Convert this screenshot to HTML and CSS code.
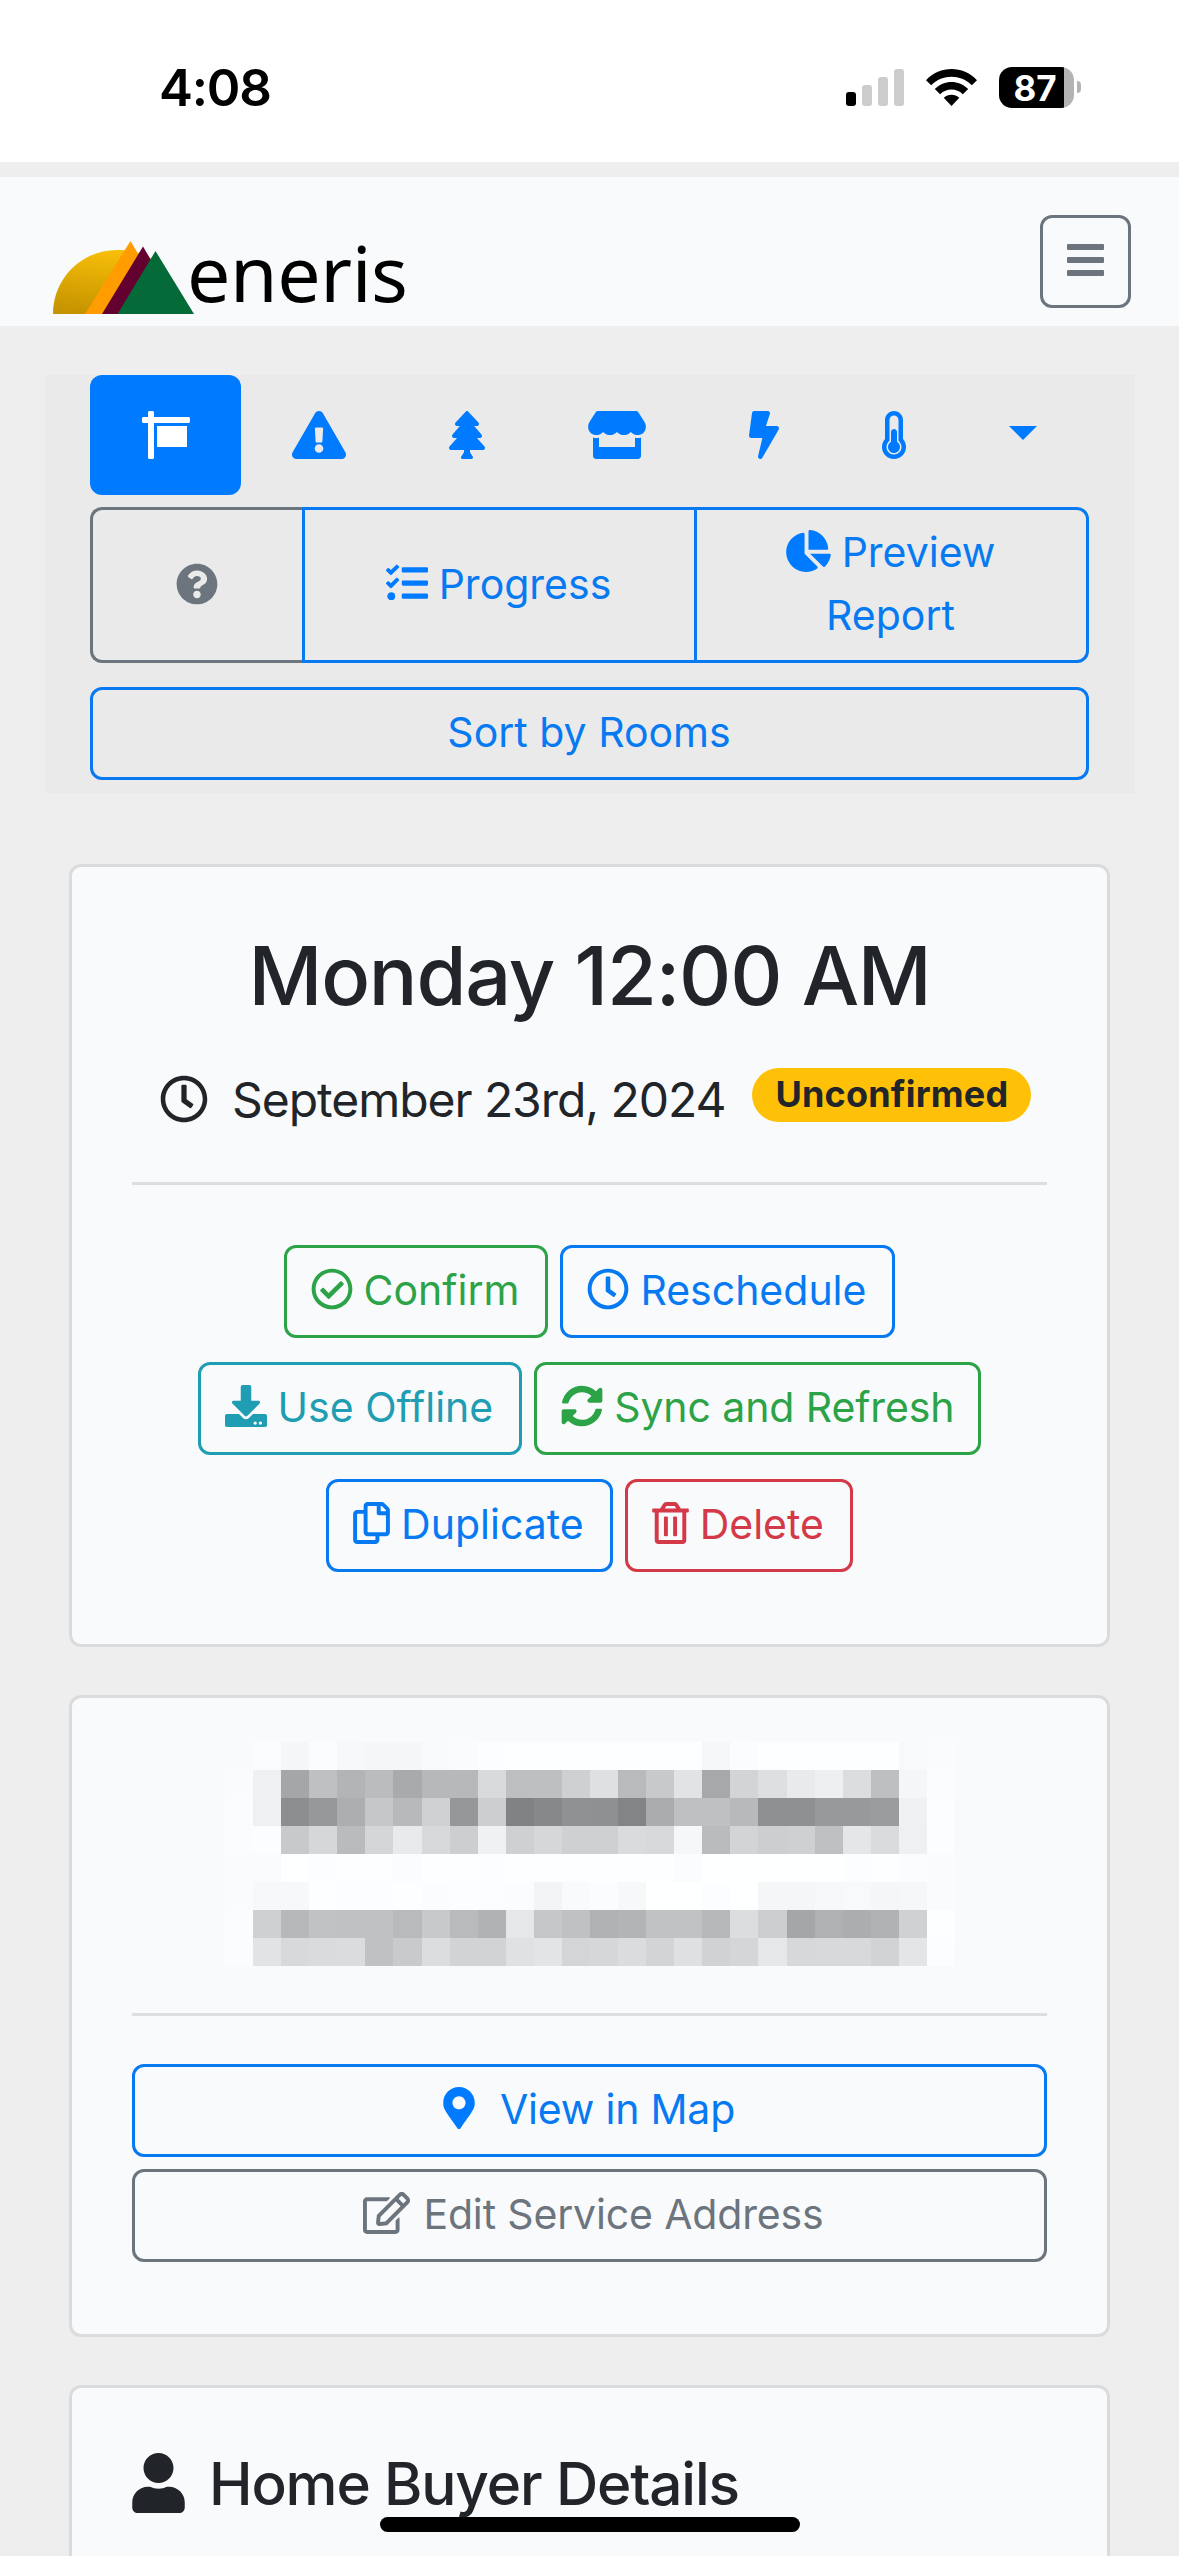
FILE: index.html
```html
<!DOCTYPE html>
<html lang="en">
<head>
<meta charset="utf-8">
<title>Eneris – Inspection</title>
<link rel="stylesheet" href="styles.css">
</head>
<body>
<header class="status">
  <div class="status-time">4:08</div>
  <div class="status-icons">
    <svg class="signal" width="58" height="37" viewBox="0 0 58 37"><rect y="23" width="10" height="14" rx="3"/><g fill="#ccc"><rect x="16" y="16" width="10" height="21" rx="3"/><rect x="32" y="8" width="10" height="29" rx="3"/><rect x="48" width="10" height="37" rx="3"/></g></svg>
    <svg class="wifi" width="51" height="37" viewBox="0 0 51 37"><path d="M0 11.2C14-3.7 37-3.7 51 11.2L45.8 16.3C34.5 5 16.500 5 5.200 16.300zM8.800 20C18 10.500 33 10.500 42.200 20L36.800 25.200C30.500 19 20.500 19 14.200 25.200zM17.700 28.700C22 24.600 29 24.600 33.300 28.700L25.500 37z"/></svg>
    <div class="battery"><span>87</span></div>
    <div class="battery-nub"></div>
  </div>
</header>

<nav class="navbar">
  <div class="brand">
    <svg width="141" height="73" viewBox="0 0 141 73">
      <defs><linearGradient id="sun" x1="0.600" y1="0" x2="0.400" y2="1"><stop offset="0" stop-color="#f9bf08"/><stop offset="1" stop-color="#c59400"/></linearGradient></defs>
      <path d="M0 73C0 37 29 9 64 9C82 9 96 14 108 25V73z" fill="url(#sun)"/>
      <path d="M32 73L77.500 0L110 55V73z" fill="#ff9c00"/>
      <path d="M49 73L90 5.500L118 53V73z" fill="#640030"/>
      <path d="M64.500 73L102.500 10L141 73z" fill="#046a38"/>
    </svg>
    <span class="brand-name">eneris</span>
  </div>
  <button class="toggler" aria-label="Menu"><i></i><i></i><i></i></button>
</nav>

<main>
  <section class="toolbar">
    <div class="tabs">
      <a class="tab active"><svg width="48" height="48" viewBox="0 0 512 512"><path d="M496 64H128V16c0-8.800-7.200-16-16-16H80c-8.800 0-16 7.200-16 16v48H16C7.200 64 0 71.200 0 80v32c0 8.800 7.200 16 16 16h48v368c0 8.800 7.200 16 16 16h32c8.800 0 16-7.200 16-16V128h368c8.800 0 16-7.200 16-16V80c0-8.800-7.200-16-16-16zM160 384h320V160H160v224z"/></svg></a>
      <a class="tab"><svg width="54" height="48" viewBox="0 0 576 512"><path d="M569.517 440.013C587.975 472.007 564.806 512 527.94 512H48.054c-36.937 0-59.999-40.055-41.577-71.987L246.423 23.985c18.467-32.009 64.72-31.951 83.154 0l239.94 416.028zM288 354c-25.405 0-46 20.595-46 46s20.595 46 46 46 46-20.595 46-46-20.595-46-46-46zm-43.673-165.346l7.418 136c.347 6.364 5.609 11.346 11.982 11.346h48.546c6.373 0 11.635-4.982 11.982-11.346l7.418-136c.375-6.874-5.098-12.654-11.982-12.654h-63.383c-6.884 0-12.356 5.780-11.981 12.654z"/></svg></a>
      <a class="tab"><svg width="36" height="48" viewBox="0 0 384 512"><path d="M378.310 378.490L298.420 288h30.630c9.010 0 16.980-5 20.780-13.060 3.800-8.040 2.550-17.260-3.280-24.050L268.420 160h28.890c9.100 0 17.300-5.350 20.860-13.610 3.520-8.130 1.860-17.590-4.240-24.080L203.660 4.830c-6.030-6.450-17.280-6.450-23.320 0L70.060 122.310c-6.100 6.490-7.750 15.950-4.240 24.080C69.380 154.650 77.590 160 86.690 160h28.890l-78.140 90.910c-5.810 6.780-7.060 15.990-3.270 24.040C37.970 283 45.930 288 54.950 288h30.630L5.690 378.490c-6 6.790-7.360 16.090-3.560 24.260 3.750 8.050 12 13.250 21.010 13.250H160v24.450l-30.290 48.400c-5.320 10.640 2.420 23.160 14.310 23.160h95.960c11.890 0 19.630-12.520 14.310-23.160L224 440.450V416h136.860c9.010 0 17.260-5.200 21.010-13.250 3.800-8.170 2.440-17.470-3.560-24.260z"/></svg></a>
      <a class="tab"><svg width="58" height="48" viewBox="0 0 616 512"><path d="M602 118.600L537.100 15C531.300 5.700 521 0 510 0H106C95 0 84.700 5.700 78.900 15L14 118.600c-33.500 53.500-3.800 127.900 58.800 136.400 4.500.6 9.100.9 13.700.9 29.600 0 55.800-13 73.800-33.100 18 20.100 44.300 33.100 73.800 33.100 29.600 0 55.800-13 73.800-33.100 18 20.100 44.300 33.100 73.800 33.100 29.600 0 55.800-13 73.800-33.100 18.100 20.100 44.300 33.100 73.800 33.100 4.700 0 9.200-.3 13.700-.9 62.800-8.400 92.600-82.800 59-136.400zM529.500 288c-10 0-19.900-1.500-29.500-3.800V384H116v-99.800c-9.600 2.200-19.500 3.800-29.500 3.800-6 0-12.100-.4-18-1.200-5.600-.8-11.100-2.100-16.400-3.600V480c0 17.700 14.300 32 32 32h448c17.700 0 32-14.300 32-32V283.200c-5.400 1.600-10.800 2.900-16.400 3.600-6.100.8-12.100 1.200-18.200 1.200z"/></svg></a>
      <a class="tab"><svg width="30" height="48" viewBox="0 0 320 512"><path d="M296 160H180.600l42.600-129.800C227.200 15 215.700 0 200 0H56C44 0 33.800 8.900 32.200 20.800l-32 240C-1.700 275.200 9.500 288 24 288h118.700L96.600 482.500c-3.600 15.200 8 29.500 23.300 29.500 8.400 0 16.400-4.400 20.800-12l176-304c9.300-15.900-2.200-36-20.700-36z"/></svg></a>
      <a class="tab"><svg width="24" height="48" viewBox="0 0 256 512"><path d="M192 384c0 35.346-28.654 64-64 64s-64-28.654-64-64c0-23.685 12.876-44.349 32-55.417V224c0-17.673 14.327-32 32-32s32 14.327 32 32v104.583c19.124 11.068 32 31.732 32 55.417zm32-84.653c19.912 22.563 32 52.194 32 84.653 0 70.696-57.303 128-128 128-.299 0-.609-.001-.909-.003C56.789 511.509-.357 453.636.002 383.333.166 351.135 12.223 321.755 32 299.347V96c0-53.019 42.981-96 96-96s96 42.981 96 96v203.347zM208 384c0-34.339-19.370-52.190-32-66.502V96c0-26.467-21.533-48-48-48S80 69.533 80 96v221.498c-12.732 14.428-31.825 32.100-31.999 66.080-.224 43.876 35.563 80.116 79.423 80.420L128 464c44.112 0 80-35.888 80-80z"/></svg></a>
      <a class="tab"><svg class="caret" width="28" height="14" viewBox="0 0 28 14"><path d="M0 0H28L14 14z"/></svg></a>
    </div>
    <div class="group">
      <button class="cell help"><svg width="42" height="42" viewBox="0 0 512 512"><path d="M504 256c0 136.997-111.043 248-248 248S8 392.997 8 256C8 119.083 119.043 8 256 8s248 111.083 248 248zM262.655 90c-54.497 0-89.255 22.957-116.549 63.758-3.536 5.286-2.353 12.415 2.715 16.258l34.699 26.310c5.205 3.947 12.621 3.008 16.665-2.122 17.864-22.658 30.113-35.797 57.303-35.797 20.429 0 45.698 13.148 45.698 32.958 0 14.976-12.363 22.667-32.534 33.976C247.128 238.528 216 254.941 216 296v4c0 6.627 5.373 12 12 12h56c6.627 0 12-5.373 12-12v-1.333c0-28.462 83.186-29.647 83.186-106.667 0-58.002-60.165-102-116.531-102zM256 338c-25.365 0-46 20.635-46 46 0 25.364 20.635 46 46 46s46-20.636 46-46c0-25.364-20.635-46-46-46z"/></svg></button>
      <button class="cell progress"><span class="line"><svg width="42" height="42" viewBox="0 0 512 512"><path d="M139.610 35.500a12 12 0 0 0-17 0L58.930 98.810l-22.700-22.120a12 12 0 0 0-17 0L3.530 92.410a12 12 0 0 0 0 17l47.590 47.400a12.780 12.780 0 0 0 17.610 0l15.590-15.620L156.520 69a12.090 12.090 0 0 0 .09-17zm0 159.190a12 12 0 0 0-17 0l-63.680 63.720-22.700-22.100a12 12 0 0 0-17 0L3.530 252a12 12 0 0 0 0 17L51 316.500a12.770 12.770 0 0 0 17.600 0l15.700-15.690 72.200-72.220a12 12 0 0 0 .09-16.900zM64 368c-26.490 0-48.590 21.500-48.590 48S37.530 464 64 464a48 48 0 0 0 0-96zm432 16H208a16 16 0 0 0-16 16v32a16 16 0 0 0 16 16h288a16 16 0 0 0 16-16v-32a16 16 0 0 0-16-16zm0-320H208a16 16 0 0 0-16 16v32a16 16 0 0 0 16 16h288a16 16 0 0 0 16-16V80a16 16 0 0 0-16-16zm0 160H208a16 16 0 0 0-16 16v32a16 16 0 0 0 16 16h288a16 16 0 0 0 16-16v-32a16 16 0 0 0-16-16z"/></svg>Progress</span></button>
      <button class="cell preview"><span class="line"><svg width="45" height="42" viewBox="0 0 544 512"><path d="M527.790 288H290.500l158.030 158.030c6.040 6.040 15.980 6.530 22.190.68 38.700-36.460 65.320-85.610 73.130-140.860 1.340-9.460-6.510-17.850-16.060-17.850zm-15.830-64.800C503.720 103.740 408.260 8.280 288.800.04 279.680-.59 272 7.100 272 16.240V240h223.770c9.140 0 16.820-7.680 16.190-16.800zM224 288V50.710c0-9.550-8.390-17.400-17.840-16.060C86.990 51.490-4.100 155.600.14 280.370 4.500 408.510 114.830 513.590 243.030 511.980c50.400-.63 96.970-16.870 135.260-44.030 7.900-5.600 8.420-17.230 1.570-24.080L224 288z"/></svg>Preview</span><span class="line">Report</span></button>
    </div>
    <button class="btn block blue">Sort by Rooms</button>
  </section>

  <section class="card">
    <h1>Monday 12:00 AM</h1>
    <div class="date">
      <svg width="48" height="48" viewBox="0 0 512 512"><path d="M256 8C119 8 8 119 8 256s111 248 248 248 248-111 248-248S393 8 256 8zm0 448c-110.500 0-200-89.500-200-200S145.500 56 256 56s200 89.500 200 200-89.500 200-200 200zm61.800-104.400l-84.900-61.700c-3.100-2.300-4.900-5.900-4.900-9.700V116c0-6.600 5.400-12 12-12h32c6.600 0 12 5.400 12 12v141.700l66.800 48.600c5.400 3.900 6.500 11.400 2.600 16.800L334.600 349c-3.900 5.300-11.400 6.500-16.800 2.600z"/></svg>
      <span class="date-text">September 23rd, 2024</span>
      <span class="badge">Unconfirmed</span>
    </div>
    <hr>
    <div class="actions">
      <div class="row">
        <button class="btn green"><svg width="42" height="42" viewBox="0 0 512 512"><path d="M256 8C119.033 8 8 119.033 8 256s111.033 248 248 248 248-111.033 248-248S392.967 8 256 8zm0 48c110.532 0 200 89.451 200 200 0 110.532-89.451 200-200 200-110.532 0-200-89.451-200-200 0-110.532 89.451-200 200-200m140.204 130.267l-22.536-22.718c-4.667-4.705-12.265-4.736-16.970-.068L215.346 303.697l-59.792-60.277c-4.667-4.705-12.265-4.736-16.970-.069l-22.719 22.536c-4.705 4.667-4.736 12.265-.068 16.971l90.781 91.516c4.667 4.705 12.265 4.736 16.970.068l172.589-171.204c4.704-4.668 4.734-12.266.067-16.971z"/></svg>Confirm</button>
        <button class="btn blue"><svg width="42" height="42" viewBox="0 0 512 512"><path d="M256 8C119 8 8 119 8 256s111 248 248 248 248-111 248-248S393 8 256 8zm0 448c-110.500 0-200-89.500-200-200S145.500 56 256 56s200 89.500 200 200-89.500 200-200 200zm61.800-104.400l-84.900-61.700c-3.100-2.300-4.900-5.900-4.900-9.700V116c0-6.600 5.400-12 12-12h32c6.600 0 12 5.400 12 12v141.700l66.800 48.600c5.400 3.900 6.500 11.400 2.600 16.800L334.600 349c-3.900 5.300-11.400 6.500-16.800 2.600z"/></svg>Reschedule</button>
      </div>
      <div class="row">
        <button class="btn teal"><svg width="42" height="42" viewBox="0 0 512 512"><path d="M216 0h80c13.300 0 24 10.700 24 24v168h87.700c17.800 0 26.700 21.500 14.100 34.100L269.700 378.300c-7.500 7.500-19.800 7.500-27.300 0L90.100 226.100c-12.600-12.600-3.700-34.100 14.100-34.100H192V24c0-13.300 10.700-24 24-24zm296 376v112c0 13.300-10.700 24-24 24H24c-13.300 0-24-10.700-24-24V376c0-13.300 10.700-24 24-24h146.700l49 49c20.100 20.100 52.500 20.100 72.600 0l49-49H488c13.300 0 24 10.700 24 24zm-124 88c0-11-9-20-20-20s-20 9-20 20 9 20 20 20 20-9 20-20zm64 0c0-11-9-20-20-20s-20 9-20 20 9 20 20 20 20-9 20-20z"/></svg>Use Offline</button>
        <button class="btn green sync"><svg width="42" height="42" viewBox="0 0 512 512"><path d="M370.720 133.280C339.458 104.008 298.888 87.962 255.848 88c-77.458.068-144.328 53.178-162.791 126.850-1.344 5.363-6.122 9.150-11.651 9.150H24.103c-7.498 0-13.194-6.807-11.807-14.176C33.933 94.924 134.813 8 256 8c66.448 0 126.791 26.136 171.315 68.685L463.030 40.970C478.149 25.851 504 36.559 504 57.941V192c0 13.255-10.745 24-24 24H345.941c-21.382 0-32.090-25.851-16.971-40.971l41.750-41.749zM32 296h134.059c21.382 0 32.090 25.851 16.971 40.971l-41.750 41.750c31.262 29.273 71.835 45.319 114.876 45.280 77.418-.07 144.315-53.144 162.787-126.849 1.344-5.363 6.122-9.150 11.651-9.150h57.304c7.498 0 13.194 6.807 11.807 14.176C478.067 417.076 377.187 504 256 504c-66.448 0-126.791-26.136-171.315-68.685L48.970 471.030C33.851 486.149 8 475.441 8 454.059V320c0-13.255 10.745-24 24-24z"/></svg>Sync and Refresh</button>
      </div>
      <div class="row">
        <button class="btn blue"><svg width="37" height="42" viewBox="0 0 448 512"><path d="M433.941 65.941l-51.882-51.882A48 48 0 0 0 348.118 0H176c-26.510 0-48 21.490-48 48v48H48c-26.510 0-48 21.490-48 48v320c0 26.510 21.490 48 48 48h224c26.510 0 48-21.490 48-48v-48h80c26.510 0 48-21.490 48-48V99.882a48 48 0 0 0-14.059-33.941zM266 464H54a6 6 0 0 1-6-6V150a6 6 0 0 1 6-6h74v224c0 26.510 21.490 48 48 48h96v42a6 6 0 0 1-6 6zm128-96H182a6 6 0 0 1-6-6V54a6 6 0 0 1 6-6h106v88c0 13.255 10.745 24 24 24h88v202a6 6 0 0 1-6 6zm6-256h-64V48h9.632c1.591 0 3.117.632 4.243 1.757l48.368 48.368a6 6 0 0 1 1.757 4.243V112z"/></svg>Duplicate</button>
        <button class="btn red"><svg width="37" height="42" viewBox="0 0 448 512"><path d="M268 416h24a12 12 0 0 0 12-12V188a12 12 0 0 0-12-12h-24a12 12 0 0 0-12 12v216a12 12 0 0 0 12 12zM432 80h-82.410l-34-56.700A48 48 0 0 0 274.410 0H173.590a48 48 0 0 0-41.160 23.300L98.410 80H16A16 16 0 0 0 0 96v16a16 16 0 0 0 16 16h16v336a48 48 0 0 0 48 48h288a48 48 0 0 0 48-48V128h16a16 16 0 0 0 16-16V96a16 16 0 0 0-16-16zM171.840 50.910A6 6 0 0 1 177 48h94a6 6 0 0 1 5.150 2.910L293.610 80H154.390zM368 464H80V128h288zm-212-48h24a12 12 0 0 0 12-12V188a12 12 0 0 0-12-12h-24a12 12 0 0 0-12 12v216a12 12 0 0 0 12 12z"/></svg>Delete</button>
      </div>
    </div>
  </section>

  <section class="card address">
    <svg class="redacted" id="redacted" width="730" height="224" viewBox="0 0 26 8" preserveAspectRatio="none" shape-rendering="crispEdges"></svg>
    <hr>
    <div class="stack">
      <button class="btn block blue map"><svg width="32" height="42" viewBox="0 0 384 512"><path d="M172.268 501.670C26.970 291.031 0 269.413 0 192 0 85.961 85.961 0 192 0s192 85.961 192 192c0 77.413-26.970 99.031-172.268 309.670-9.535 13.774-29.930 13.773-39.464 0zM192 272c44.183 0 80-35.817 80-80s-35.817-80-80-80-80 35.817-80 80 35.817 80 80 80z"/></svg>View in Map</button>
      <button class="btn block gray edit"><svg width="47" height="42" viewBox="0 0 576 512"><path d="M402.300 344.900l32-32c5-5 13.700-1.500 13.700 5.700V464c0 26.500-21.500 48-48 48H48c-26.500 0-48-21.500-48-48V112c0-26.500 21.500-48 48-48h273.500c7.100 0 10.700 8.600 5.700 13.700l-32 32c-1.500 1.500-3.500 2.300-5.700 2.300H48v352h352V350.500c0-2.100.8-4.100 2.300-5.600zm156.600-201.800L296.300 405.700l-90.400 10c-26.200 2.900-48.500-19.200-45.600-45.600l10-90.400L432.900 17.100c22.900-22.900 59.900-22.900 82.700 0l43.200 43.200c22.900 22.900 22.900 60 .1 82.800zM460.100 174L402 115.900 216.200 301.800l-7.300 65.300 65.300-7.300L460.100 174zm64.800-79.700l-43.200-43.200c-4.100-4.100-10.800-4.100-14.800 0L436 82l58.100 58.100 30.900-30.900c4-4.200 4-10.800-.1-14.900z"/></svg>Edit Service Address</button>
    </div>
  </section>

  <section class="card buyer">
    <h2><svg width="53" height="60" viewBox="0 0 448 512"><path d="M224 256c70.700 0 128-57.300 128-128S294.700 0 224 0 96 57.300 96 128s57.300 128 128 128zm89.600 32h-16.700c-22.200 10.200-46.900 16-72.900 16s-50.600-5.800-72.900-16h-16.700C60.200 288 0 348.200 0 422.400V464c0 26.500 21.500 48 48 48h352c26.500 0 48-21.500 48-48v-41.600c0-74.200-60.200-134.400-134.400-134.400z"/></svg><span>Home Buyer Details</span></h2>
  </section>
</main>
<div class="home-indicator"></div>
<script src="redacted.js"></script>
</body>
</html>
```
FILE: redacted.js
```js
// Mosaic that hides the client's name and address: one grey level per cell.
const rows = [
  "fa fc f6 fc f8 f6 f6 fa fb fd fe fe fe fe fe fe fe f7 fc fe fe fe fe fe f9 fb",
  "fb f0 a6 c0 b4 bc aa b8 b8 da bf bf d0 e0 ba c9 e3 a8 d4 df ea ef dd bf f6 fc",
  "fc f0 8e 98 ae c7 b9 d1 97 ce 82 88 91 90 84 ac c0 c0 b9 90 90 99 99 9c f1 fd",
  "fc fd c9 d7 bb d6 ea d9 ce f1 d0 d7 d0 d0 db d9 f7 bb d4 ce d0 c0 e6 db f0 fd",
  "fb fb ff fd fe fe fc fe fe fd fe fe fe fe fe fe fc ff ff ff ff ff fd fe fc fb",
  "fb f8 f8 fe fd fd fe fc fd fd fc f4 fa fc f8 ff ff fd ff f6 f6 f8 f9 f6 f7 fb",
  "fc d0 b8 c2 c1 c1 ba c9 ba b2 e7 c7 c1 b1 b4 c2 c2 b8 dd ce a6 b1 ad b2 d1 fe",
  "fc e3 d9 db dc c1 ca dd d3 d3 e1 e4 d5 d7 dc d4 e0 d2 d6 e7 d8 d9 d9 d3 e5 fd"
];
const svg = document.getElementById("redacted");
rows.forEach((row, y) => row.split(" ").forEach((v, x) => {
  const r = document.createElementNS("http://www.w3.org/2000/svg", "rect");
  const g = parseInt(v, 16);
  const cool = Math.min(255, g + 2);
  r.setAttribute("x", x);
  r.setAttribute("y", y);
  r.setAttribute("width", 1);
  r.setAttribute("height", 1);
  r.setAttribute("fill", `rgb(${g - 1},${g},${cool})`);
  svg.appendChild(r);
}));
```
FILE: styles.css
```css
* { box-sizing: border-box; }
body {
  margin: 0;
  height: 2556px;
  overflow: hidden;
  background: #eee;
  color: #212529;
  font-family: Inter, "Liberation Sans", sans-serif;
  font-size: 41px;
  line-height: 63px;
}
svg { display: block; flex: none; fill: currentColor; }
button { font: inherit; margin: 0; background: none; }

.status {
  height: 162px;
  padding: 0 98px 0 159px;
  display: flex;
  justify-content: space-between;
  background: #fff;
  color: #000;
}
.status-time { font-size: 51px; font-weight: 600; line-height: 62px; padding-top: 57px; letter-spacing: -1.2px; }
.status-icons { display: flex; align-items: center; height: 42px; margin-top: 66px; }
.wifi { margin-left: 22px; }
.battery {
  width: 75px;
  height: 41px;
  margin-left: 22px;
  border-radius: 13px;
  background: linear-gradient(90deg, #000 65px, #b3b3b3 65px);
  color: #fff;
  font-size: 35px;
  font-weight: 700;
  line-height: 42px;
  text-align: center;
  padding-right: 3px;
}
.battery-nub { width: 4px; height: 12px; margin-left: 3px; border-radius: 0 4px 4px 0; background: #b3b3b3; }

.navbar {
  height: 149px;
  margin-top: 15px;
  padding: 38px 48px 0 53px;
  display: flex;
  justify-content: space-between;
  align-items: flex-start;
  background: #f9fafc;
}
.brand { display: flex; align-items: flex-end; height: 99px; }
.brand-name {
  font-family: "Noto Sans", sans-serif;
  font-size: 77px;
  line-height: 77px;
  letter-spacing: -0.4px;
  color: #000;
  margin: 0 0 3px -7px;
}
.toggler {
  width: 91px;
  height: 93px;
  border: 3px solid #6c757d;
  border-radius: 12px;
  display: flex;
  flex-direction: column;
  align-items: center;
  justify-content: center;
  gap: 7px;
  padding: 0 0 3px;
}
.toggler i { width: 37px; height: 6px; background: #6c757d; border-radius: 1px; }

.toolbar { margin: 49px 44px 0 45px; padding: 0 46px 12px 45px; background: #eaeaea; height: 418px; }
.tabs { display: flex; color: #007bff; }
.tab { flex: 1 1 auto; height: 120px; padding: 0 49px 0 47px; display: flex; align-items: center; justify-content: center; }
.tab.active { background: #007bff; color: #fff; border-radius: 12px; padding: 0 48px; }
.caret { margin-bottom: 4px; }

.group { display: grid; grid-template-columns: 212px 392px 395px; height: 156px; margin: 12px 0 24px; }
.cell {
  border: 3px solid #077af2;
  color: #077af2;
  padding: 0 2px 2px 0;
  display: flex;
  flex-direction: column;
  align-items: center;
  justify-content: center;
}
.help { border-color: #6c757d; color: #6c757d; border-right: 0; border-radius: 12px 0 0 12px; }
.progress { border-right: 0; }
.preview { border-radius: 0 12px 12px 0; }
.line { display: flex; align-items: center; gap: 11px; }
.line svg { margin-top: -3px; color: #007bff; }

.btn {
  height: 93px;
  border: 3px solid currentColor;
  border-radius: 12px;
  padding: 11px 25px 13px 24px;
  display: flex;
  align-items: center;
  justify-content: center;
  gap: 11px;
  white-space: nowrap;
}
.btn svg { margin-top: -3px; }
.block { width: 100%; }
.blue { color: #077af2; }
.green { color: #2ca347; }
.teal { color: #1f9db2; }
.red { color: #d43948; }
.gray { color: #6c757d; }
.map { gap: 25px; letter-spacing: -0.2px; }
.map svg { color: #007bff; }
.sync { letter-spacing: -0.1px; }
.edit { gap: 13px; padding-left: 33px; letter-spacing: -0.15px; }

.card {
  margin: 0 69px 48px;
  padding: 0 60px;
  border: 3px solid #d9dbdc;
  border-radius: 12px;
  background: #f9fafc;
  height: 783px;
}
.toolbar + .card { margin-top: 71px; }
h1 { margin: 59px 0 0; font-size: 81px; font-weight: 500; line-height: 100px; letter-spacing: -1.2px; text-align: center; white-space: nowrap; }
.date { display: flex; align-items: center; height: 72px; margin: 37px 0 0 28px; white-space: nowrap; }
.date-text { font-size: 48px; margin: 1px 0 0 24px; letter-spacing: -1.05px; }
.badge {
  width: 279px;
  height: 54px;
  margin: -9px 0 0 27px;
  border-radius: 27px;
  background: #ffc107;
  font-size: 36px;
  font-weight: 700;
  line-height: 52px;
  letter-spacing: 0.2px;
  text-align: center;
}
hr { height: 3px; border: 0; margin: 0; background: #dcdee0; }
.date + hr { margin-top: 47px; }
.actions { display: flex; flex-direction: column; gap: 24px; margin-top: 60px; }
.row { display: flex; justify-content: center; gap: 12px; }
.row .btn { padding-right: 26px; }
.row .sync { padding-right: 24px; }

.address { height: 642px; }
.redacted { margin: 44px 0 47px 93px; }
.stack { display: flex; flex-direction: column; gap: 12px; margin-top: 48px; }

.buyer { height: 171px; margin-bottom: 0; border-bottom: 0; border-radius: 12px 12px 0 0; }
h2 { display: flex; align-items: center; gap: 24px; margin: 60px 0 0; font-size: 58.500px; font-weight: 500; line-height: 72px; letter-spacing: -1.15px; white-space: nowrap; }
h2 svg { margin-top: -3px; }

.home-indicator { position: absolute; left: 380px; top: 2517px; width: 420px; height: 15px; border-radius: 8px; background: #000; }
```
